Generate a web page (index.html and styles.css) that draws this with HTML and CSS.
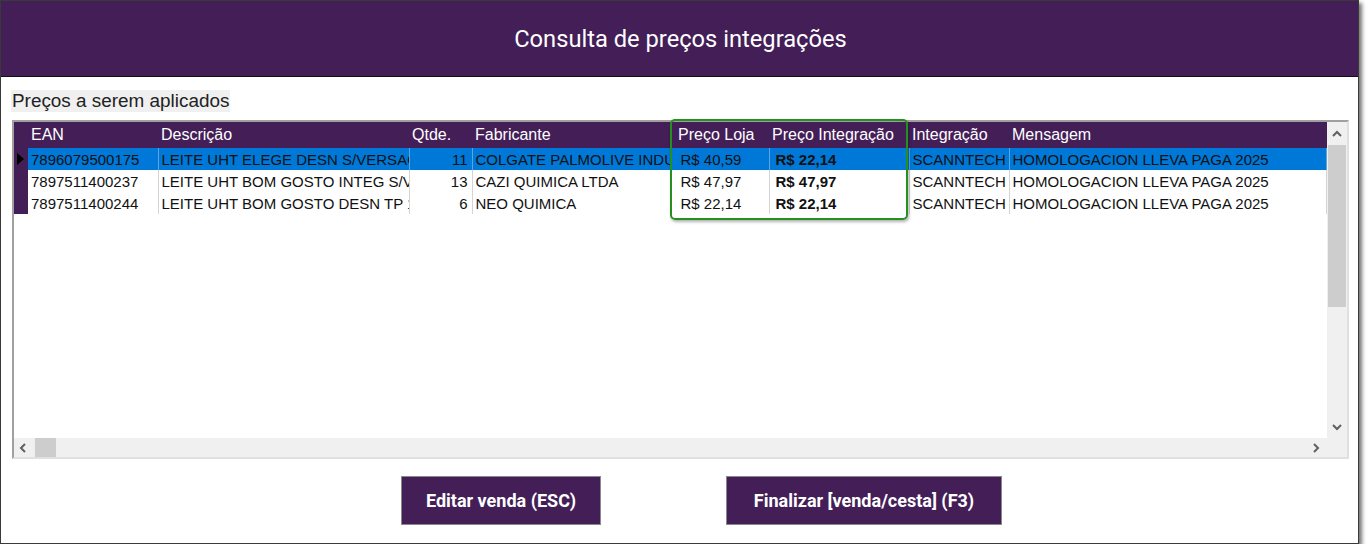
FILE: index.html
```html
<!DOCTYPE html>
<html lang="pt-BR">
<head>
  <meta charset="UTF-8">
  <title>Consulta de preços integrações</title>
  <link rel="stylesheet" href="styles.css">
</head>
<body>
  <div class="window">
    <div class="title-bar">Consulta de preços integrações</div>

    <div class="content">
      <span class="caption">Preços a serem aplicados</span>

      <div class="grid">
        <div class="grid-main">
          <div class="grid-area">
            <table class="data">
              <colgroup>
                <col class="c-ind">
                <col class="c-ean">
                <col class="c-desc">
                <col class="c-qtd">
                <col class="c-fab">
                <col class="c-loja">
                <col class="c-integ">
                <col class="c-int">
                <col>
              </colgroup>
              <thead>
                <tr>
                  <th class="ind"></th>
                  <th>EAN</th>
                  <th>Descrição</th>
                  <th>Qtde.</th>
                  <th>Fabricante</th>
                  <th class="price-head">Preço Loja</th>
                  <th>Preço Integração</th>
                  <th>Integração</th>
                  <th>Mensagem</th>
                </tr>
              </thead>
              <tbody>
                <tr class="selected">
                  <td class="ind"><span class="pointer"></span></td>
                  <td>7896079500175</td>
                  <td>LEITE UHT ELEGE DESN S/VERSAO 1L</td>
                  <td class="num">11</td>
                  <td>COLGATE PALMOLIVE INDUSTRIAL LTDA</td>
                  <td class="price">R$ 40,59</td>
                  <td class="price bold">R$ 22,14</td>
                  <td>SCANNTECH</td>
                  <td>HOMOLOGACION LLEVA PAGA 2025</td>
                </tr>
                <tr>
                  <td class="ind"></td>
                  <td>7897511400237</td>
                  <td>LEITE UHT BOM GOSTO INTEG S/VERSAO 1L</td>
                  <td class="num">13</td>
                  <td>CAZI QUIMICA LTDA</td>
                  <td class="price">R$ 47,97</td>
                  <td class="price bold">R$ 47,97</td>
                  <td>SCANNTECH</td>
                  <td>HOMOLOGACION LLEVA PAGA 2025</td>
                </tr>
                <tr>
                  <td class="ind"></td>
                  <td>7897511400244</td>
                  <td>LEITE UHT BOM GOSTO DESN TP 1L</td>
                  <td class="num">6</td>
                  <td>NEO QUIMICA</td>
                  <td class="price">R$ 22,14</td>
                  <td class="price bold">R$ 22,14</td>
                  <td>SCANNTECH</td>
                  <td>HOMOLOGACION LLEVA PAGA 2025</td>
                </tr>
              </tbody>
            </table>
          </div>

          <div class="vscroll">
            <span class="arrow-v">
              <svg width="10" height="7" viewBox="0 0 10 7"><polyline points="1,6 5,2 9,6" fill="none" stroke="#606060" stroke-width="2"/></svg>
            </span>
            <span class="vthumb"></span>
            <span class="spacer"></span>
            <span class="arrow-v">
              <svg width="10" height="7" viewBox="0 0 10 7"><polyline points="1,1 5,5 9,1" fill="none" stroke="#606060" stroke-width="2"/></svg>
            </span>
          </div>
        </div>

        <div class="hscroll">
          <span class="arrow-h left">
            <svg width="7" height="10" viewBox="0 0 7 10"><polyline points="6,1 2,5 6,9" fill="none" stroke="#606060" stroke-width="2"/></svg>
          </span>
          <span class="hthumb"></span>
          <span class="spacer"></span>
          <span class="arrow-h right">
            <svg width="7" height="10" viewBox="0 0 7 10"><polyline points="1,1 5,5 1,9" fill="none" stroke="#606060" stroke-width="2"/></svg>
          </span>
          <span class="corner"></span>
        </div>

        <!-- destaque das colunas de preço -->
        <div class="highlight"></div>
      </div>

      <div class="actions">
        <button class="btn">Editar venda (ESC)</button>
        <button class="btn wide">Finalizar [venda/cesta] (F3)</button>
      </div>
    </div>
  </div>
</body>
</html>
```

FILE: styles.css
```css
body {
  margin: 0;
  background: #fff;
  font-family: 'Liberation Sans', Arial, sans-serif;
}

.window {
  width: 1359px;
  height: 544px;
  box-sizing: border-box;
  border: 1px solid #3a3a3a;
  background: #fff;
  box-shadow: 3px 3px 4px rgba(0, 0, 0, 0.55);
}

.title-bar {
  height: 75px;
  border-bottom: 1px solid #111;
  background: #431e57;
  color: #fff;
  font-family: Roboto, sans-serif;
  font-size: 23.7px;
  display: flex;
  align-items: center;
  justify-content: center;
  padding-left: 2px;
}

.content {
  padding: 13px 10px 0 10px;
}

.caption {
  display: block;
  width: fit-content;
  height: 22px;
  line-height: 22px;
  padding: 0 1px;
  background: #f0f0f0;
  color: #222;
  font-size: 18.9px;
}

.grid {
  position: relative;
  margin: 8px 0 0 1px;
  width: 1337px;
  height: 339px;
  box-sizing: border-box;
  border: 2px solid;
  border-color: #a0a0a0 #e0e0e0 #e0e0e0 #a0a0a0;
  display: flex;
  flex-direction: column;
}

.grid-main {
  display: flex;
  height: 316px;
}

.grid-area {
  width: 1313px;
  background: #fff;
  overflow: hidden;
}

.data {
  width: 1313px;
  table-layout: fixed;
  border-collapse: collapse;
  font-size: 15px;
}

.c-ind { width: 14px; }
.c-ean { width: 130px; }
.c-desc { width: 251px; }
.c-qtd { width: 63px; }
.c-fab { width: 199px; }
.c-loja { width: 98px; }
.c-integ { width: 140px; }
.c-int { width: 100px; }

.data th {
  height: 26px;
  padding: 0 3px;
  background: #431e57;
  color: #fff;
  font-size: 16px;
  font-weight: normal;
  text-align: left;
  white-space: nowrap;
  overflow: hidden;
}

.data th.price-head {
  padding-left: 7px;
}

.data td {
  height: 22px;
  padding: 0 3px;
  color: #111;
  white-space: nowrap;
  overflow: hidden;
  text-overflow: clip;
  border-right: 1px solid #d4d4d4;
}

.data td.ind {
  background: #431e57;
  border-right: none;
  padding: 0;
  position: relative;
}

.data td.num {
  text-align: right;
  padding-right: 4px;
}

.data td.price {
  padding-left: 9px;
}

.data td.bold {
  padding-left: 6px;
  font-weight: bold;
}

.data tr.selected td {
  background: #0078d7;
  border-right-color: #5aa4e3;
}

.data tr.selected td.ind {
  background: #431e57;
}

.pointer {
  position: absolute;
  left: 3px;
  top: 5px;
  border-left: 7px solid #000;
  border-top: 6px solid transparent;
  border-bottom: 6px solid transparent;
}

.vscroll {
  width: 20px;
  background: #f0f0f0;
  display: flex;
  flex-direction: column;
}

.arrow-v {
  height: 22px;
  display: flex;
  align-items: center;
  justify-content: center;
}

.vthumb {
  height: 162px;
  margin: 1px 1px 0 1px;
  background: #cdcdcd;
}

.spacer {
  flex: 1;
}

.hscroll {
  height: 19px;
  background: #f0f0f0;
  display: flex;
  align-items: stretch;
}

.arrow-h {
  display: flex;
  align-items: center;
  justify-content: center;
}

.arrow-h.left {
  width: 16px;
}

.arrow-h.right {
  width: 21px;
}

.hthumb {
  width: 21px;
  margin-left: 5px;
  background: #cdcdcd;
}

.corner {
  width: 20px;
  background: #f0f0f0;
}

.highlight {
  position: absolute;
  left: 656px;
  top: -3px;
  width: 238px;
  height: 101px;
  box-sizing: border-box;
  border: 2px solid #23901f;
  border-radius: 5px;
  box-shadow: 1px 2px 3px rgba(0, 0, 0, 0.3);
}

.actions {
  display: flex;
  gap: 125px;
  margin-top: 17px;
  padding-left: 390px;
}

.btn {
  width: 200px;
  height: 49px;
  border: 1px solid #8a8a8a;
  background: #431e57;
  color: #fff;
  font-family: Roboto, sans-serif;
  font-weight: bold;
  font-size: 18px;
  cursor: pointer;
}

.btn.wide {
  width: 276px;
}
```
